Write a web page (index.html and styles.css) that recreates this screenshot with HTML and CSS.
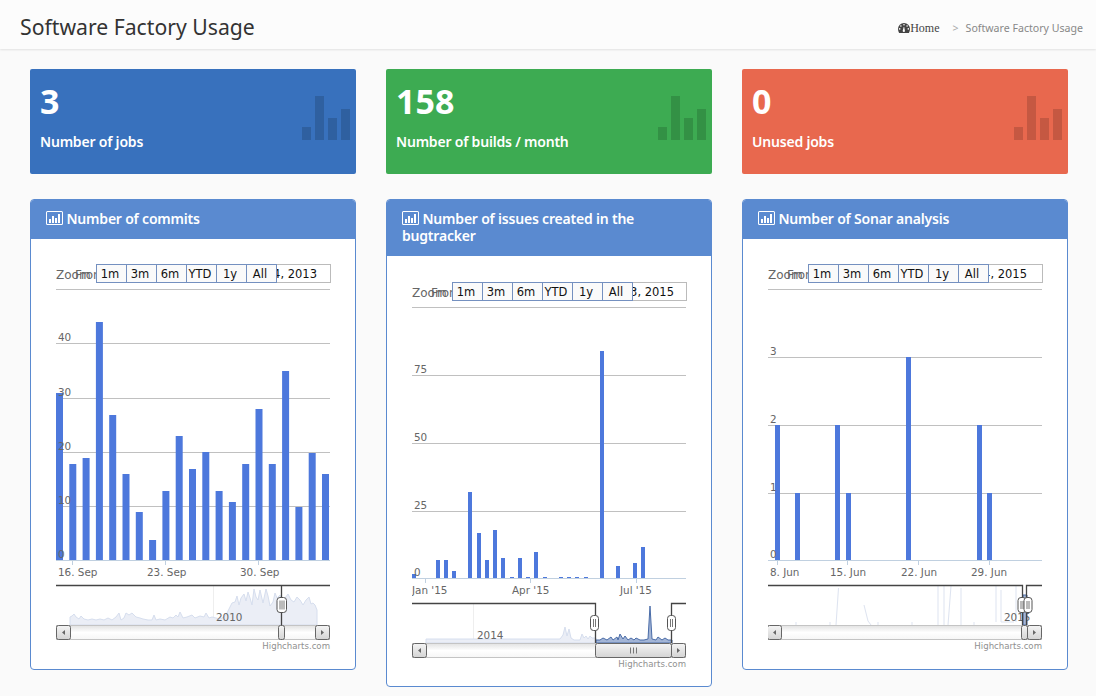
FILE: index.html
```html
<!DOCTYPE html>
<html lang="en">
<head>
    <meta charset="UTF-8">
    <title>Software Factory Usage</title>
    <link rel="stylesheet" href="styles.css">
</head>
<body>
    <header class="page-header">
        <h1>Software Factory Usage</h1>
        <ol class="breadcrumb">
            <li class="crumb-home">
                <svg class="gauge" viewBox="0 0 12 10"><path d="M6 0a6 6 0 0 0-6 6c0 1.500.4 2.800 1.100 4h9.800c.7-1.200 1.100-2.500 1.100-4a6 6 0 0 0-6-6zM1.700 6.700a.8.8 0 1 1 0-1.600.8.8 0 0 1 0 1.600zm1.200-2.900a.8.8 0 1 1 0-1.600.8.8 0 0 1 0 1.600zm3.100-1.200a.8.8 0 1 1 0-1.600.8.8 0 0 1 0 1.600zm1 5.700a1.200 1.200 0 0 1-2.300-.6l1-3.600.5-.1zm2.100-4.500a.8.8 0 1 1 0-1.600.8.8 0 0 1 0 1.600zm1.200 2.900a.8.8 0 1 1 0-1.600.8.8 0 0 1 0 1.600z" fill-rule="evenodd"/></svg>Home
            </li>
            <li class="crumb-sep">&gt;</li>
            <li class="crumb-current">Software Factory Usage</li>
        </ol>
    </header>

    <main class="content">
        <section class="stats">
            <div class="stat stat-blue">
                <div class="stat-value">3</div>
                <div class="stat-label">Number of jobs</div>
                <svg class="stat-icon" viewBox="0 0 48 44"><path d="M0 31h9v13H0zM13 0h9v44h-9zM26 22h9v22h-9zM39 13h9v31h-9z"/></svg>
            </div>
            <div class="stat stat-green">
                <div class="stat-value">158</div>
                <div class="stat-label">Number of builds / month</div>
                <svg class="stat-icon" viewBox="0 0 48 44"><path d="M0 31h9v13H0zM13 0h9v44h-9zM26 22h9v22h-9zM39 13h9v31h-9z"/></svg>
            </div>
            <div class="stat stat-red">
                <div class="stat-value">0</div>
                <div class="stat-label">Unused jobs</div>
                <svg class="stat-icon" viewBox="0 0 48 44"><path d="M0 31h9v13H0zM13 0h9v44h-9zM26 22h9v22h-9zM39 13h9v31h-9z"/></svg>
            </div>
        </section>

        <section class="panels">
            <!-- commits -->
            <article class="panel">
                <h2 class="panel-title"><svg class="panel-icon" viewBox="0 0 17 14"><path d="M1.500 0h14A1.500 1.500 0 0 1 17 1.500v11a1.500 1.500 0 0 1-1.500 1.500h-14A1.500 1.500 0 0 1 0 12.500v-11A1.500 1.500 0 0 1 1.500 0zm0 1a.5.5 0 0 0-.5.500v11c0 .3.200.5.500.5h14c.3 0 .5-.2.5-.5v-11a.5.5 0 0 0-.5-.5zM3 8h2v4H3zM6 5h2v7H6zM9 7h2v5H9zM12 3h2v9h-2z" fill-rule="evenodd"/></svg> Number of commits</h2>
                <div class="panel-body">
                    <svg class="chart" viewBox="56 262 276 393">
                        <defs>
                            <linearGradient id="track" x1="0" y1="0" x2="0" y2="1">
                                <stop offset="0" stop-color="#e2e2e2"/>
                                <stop offset="0.5" stop-color="#fff"/>
                                <stop offset="1" stop-color="#f6f6f6"/>
                            </linearGradient>
                            <linearGradient id="btn" x1="0" y1="0" x2="0" y2="1">
                                <stop offset="0" stop-color="#f4f4f4"/>
                                <stop offset="1" stop-color="#d4d4d4"/>
                            </linearGradient>
                        </defs>
                        <text class="rs-label" x="56" y="279">Zoom</text>
                        <text class="rs-label" x="75" y="279">From</text>
                        <rect class="rs-input" x="96.500" y="264.500" width="234" height="18"/>
                        <text class="rs-date" x="317" y="278" text-anchor="end">Sep 14, 2013</text>
                        <g class="rs-btns">
                            <rect x="96.500" y="264.500" width="30" height="18"/><rect x="126.500" y="264.500" width="30" height="18"/><rect x="156.500" y="264.500" width="30" height="18"/><rect x="186.500" y="264.500" width="30" height="18"/><rect x="216.500" y="264.500" width="30" height="18"/><rect x="246.500" y="264.500" width="30" height="18"/>
                        </g>
                        <g class="rs-text">
                            <text x="110" y="278">1m</text><text x="140" y="278">3m</text><text x="170" y="278">6m</text><text x="200" y="278">YTD</text><text x="230" y="278">1y</text><text x="260" y="278">All</text>
                        </g>

                        <path class="grid" d="M56 289.500h274M56 343.500h274M56 398.500h274M56 452.500h274M56 506.500h274"/>
                        <path class="bars" d="M56 393h7v167h-7zM69.300 464h7v96h-7zM82.600 458h7v102h-7zM95.900 322h7v238h-7zM109.200 415h7v145h-7zM122.500 474h7v86h-7zM135.800 512h7v48h-7zM149.100 540h7v20h-7zM162.400 491h7v69h-7zM175.700 436h7v124h-7zM189 469h7v91h-7zM202.300 452h7v108h-7zM215.600 491h7v69h-7zM228.900 502h7v58h-7zM242.200 464h7v96h-7zM255.500 409h7v151h-7zM268.800 464h7v96h-7zM282.100 371h7v189h-7zM295.400 507h7v53h-7zM308.700 453h7v107h-7zM322 474h7v86h-7z"/>
                        <path class="axis" d="M56 560.500h274M72.500 560v5M165.500 560v5M258.500 560v5"/>
                        <g class="label">
                            <text x="58" y="341">40</text><text x="58" y="396">30</text><text x="58" y="450">20</text><text x="58" y="504">10</text><text x="58" y="558">0</text>
                            <text x="58" y="576">16. Sep</text><text x="147" y="576">23. Sep</text><text x="240" y="576">30. Sep</text>
                        </g>

                        <path class="nav-grid" d="M213.500 586v39"/>
                        <path class="nav-area" d="M70 625V617L72 616 74 614 76 617 79 619 81 616 84 619 88 620 92 619 96 620 100 619 104 620 108 618 112 620 116 617 119 613 121 620 124 618 126 613 129 615 132 613 136 617 140 618 143 619 148 620 152 620 154 615 156 620 160 619 165 620 170 617 173 618 176 615 178 617 180 612 183 618 187 617 192 615 195 618 200 616 204 617 206 613 209 618 212 617 216 618 220 619 224 617 227 613 230 607 232 603 235 602 237 596 239 605 241 598 244 594 246 601 248 592 250 598 252 605 254 589 256 597 258 600 260 590 263 603 266 589 268 596 270 606 273 602 275 593 277 598 280 595 283 605 285 598 288 594 291 600 294 602 297 597 300 600 303 605 306 600 309 597 311 604 313 603 315 605 317 610V625z"/>
                        <text class="label" x="216" y="621">2010</text>
                        <path class="nav-mask" d="M56 585.500H281.500M281.500 585V625M281.500 585.500H330"/>
                        <rect class="track" x="56.500" y="625.500" width="273" height="14"/>
                        <rect class="thumb" x="278.500" y="625.500" width="6" height="14" rx="2"/>
                        <rect class="sb-btn" x="56.500" y="625.500" width="14" height="14" rx="2"/><path class="sb-arrow" d="M65 630v5l-3-2.500z"/>
                        <rect class="sb-btn" x="315.500" y="625.500" width="14" height="14" rx="2"/><path class="sb-arrow" d="M321 630v5l3-2.500z"/>
                        <rect class="handle" x="277" y="597.500" width="9.500" height="15" rx="3"/><path class="grip" d="M280 600.500v9M282 600.500v9M284 600.500v9"/>
                        <text class="credits" x="330" y="649" text-anchor="end">Highcharts.com</text>
                    </svg>
                </div>
            </article>

            <!-- issues -->
            <article class="panel">
                <h2 class="panel-title"><svg class="panel-icon" viewBox="0 0 17 14"><path d="M1.500 0h14A1.500 1.500 0 0 1 17 1.500v11a1.500 1.500 0 0 1-1.500 1.500h-14A1.500 1.500 0 0 1 0 12.500v-11A1.500 1.500 0 0 1 1.500 0zm0 1a.5.5 0 0 0-.5.500v11c0 .3.200.5.500.5h14c.3 0 .5-.2.5-.5v-11a.5.5 0 0 0-.5-.5zM3 8h2v4H3zM6 5h2v7H6zM9 7h2v5H9zM12 3h2v9h-2z" fill-rule="evenodd"/></svg> Number of issues created in the bugtracker</h2>
                <div class="panel-body">
                    <svg class="chart" viewBox="412 279 276 393">
                        <text class="rs-label" x="412" y="297">Zoom</text>
                        <text class="rs-label" x="431" y="297">From</text>
                        <rect class="rs-input" x="452.500" y="282.500" width="234" height="18"/>
                        <text class="rs-date" x="674" y="296" text-anchor="end">Jul 13, 2015</text>
                        <g class="rs-btns">
                            <rect x="452.500" y="282.500" width="30" height="18"/><rect x="482.500" y="282.500" width="30" height="18"/><rect x="512.500" y="282.500" width="30" height="18"/><rect x="542.500" y="282.500" width="30" height="18"/><rect x="572.500" y="282.500" width="30" height="18"/><rect x="602.500" y="282.500" width="30" height="18"/>
                        </g>
                        <g class="rs-text">
                            <text x="466" y="296">1m</text><text x="496" y="296">3m</text><text x="526" y="296">6m</text><text x="556" y="296">YTD</text><text x="586" y="296">1y</text><text x="616" y="296">All</text>
                        </g>

                        <path class="grid" d="M412 307.500h274M412 375.500h274M412 443.500h274M412 511.500h274"/>
                        <path class="bars" d="M412 574h4v4h-4zM436 560h4v18h-4zM444 560h4v18h-4zM452 571h4v7h-4zM468 492h4v86h-4zM477 533h4v45h-4zM485 560h4v18h-4zM493 530h4v48h-4zM501 558h4v20h-4zM510 577h4v1h-4zM518 558h4v20h-4zM526 577h4v1h-4zM534 552h4v26h-4zM543 577h4v1h-4zM559 577h4v1h-4zM567 577h4v1h-4zM575 577h4v1h-4zM584 577h4v1h-4zM600 351h4v227h-4zM616 566h4v12h-4zM633 563h4v15h-4zM641 547h4v31h-4z"/>
                        <path class="axis" d="M412 578.500h274M425.500 578v5M530.500 578v5M636.500 578v5"/>
                        <g class="label">
                            <text x="414" y="373">75</text><text x="414" y="441">50</text><text x="414" y="509">25</text><text x="414" y="576">0</text>
                            <text x="412" y="594">Jan '15</text><text x="512" y="594">Apr '15</text><text x="620" y="594">Jul '15</text>
                        </g>

                        <path class="nav-grid" d="M473.500 604v39"/>
                        <path class="nav-area" d="M426 643V639H560L563 635 565 627 567 636 569 629 571 638 574 640 580 640 582 634 584 638 586 636 588 639 590 636 592 638 596 638V643z"/>
                        <path class="nav-area-on" d="M596 643V640L600 640 603 638 607 640 611 637 613 640 617 637 618 640 620 634 623 639 625 636 628 640 631 638 634 640 636 638 640 640 644 640 648 639 650 606 652 639 656 640 658 637 662 640 665 638 668 640 672 640V643z"/>
                        <text class="label" x="477" y="639">2014</text>
                        <path class="nav-mask" d="M412 603.500H595.500V643M671.500 643V603.500H686"/>
                        <rect class="track" x="412.500" y="643.500" width="273" height="14"/>
                        <rect class="thumb" x="595.500" y="643.500" width="76" height="14" rx="2"/><path class="grip" d="M630.500 647.500v6M633.500 647.500v6M636.500 647.500v6"/>
                        <rect class="sb-btn" x="412.500" y="643.500" width="14" height="14" rx="2"/><path class="sb-arrow" d="M421 648v5l-3-2.500z"/>
                        <rect class="sb-btn" x="671.500" y="643.500" width="14" height="14" rx="2"/><path class="sb-arrow" d="M677 648v5l3-2.500z"/>
                        <rect class="handle" x="590.500" y="615.500" width="8" height="15" rx="3"/><path class="grip" d="M593.500 619v8M595.500 619v8"/>
                        <rect class="handle" x="667.500" y="615.500" width="8" height="15" rx="3"/><path class="grip" d="M670.500 619v8M672.500 619v8"/>
                        <text class="credits" x="686" y="667" text-anchor="end">Highcharts.com</text>
                    </svg>
                </div>
            </article>

            <!-- sonar -->
            <article class="panel">
                <h2 class="panel-title"><svg class="panel-icon" viewBox="0 0 17 14"><path d="M1.500 0h14A1.500 1.500 0 0 1 17 1.500v11a1.500 1.500 0 0 1-1.500 1.500h-14A1.500 1.500 0 0 1 0 12.500v-11A1.500 1.500 0 0 1 1.500 0zm0 1a.5.5 0 0 0-.5.500v11c0 .3.200.5.500.5h14c.3 0 .5-.2.5-.5v-11a.5.5 0 0 0-.5-.5zM3 8h2v4H3zM6 5h2v7H6zM9 7h2v5H9zM12 3h2v9h-2z" fill-rule="evenodd"/></svg> Number of Sonar analysis</h2>
                <div class="panel-body">
                    <svg class="chart" viewBox="768 262 276 393">
                        <text class="rs-label" x="768" y="279">Zoom</text>
                        <text class="rs-label" x="787" y="279">From</text>
                        <rect class="rs-input" x="808.500" y="264.500" width="234" height="18"/>
                        <text class="rs-date" x="1027" y="278" text-anchor="end">Jul 14, 2015</text>
                        <g class="rs-btns">
                            <rect x="808.500" y="264.500" width="30" height="18"/><rect x="838.500" y="264.500" width="30" height="18"/><rect x="868.500" y="264.500" width="30" height="18"/><rect x="898.500" y="264.500" width="30" height="18"/><rect x="928.500" y="264.500" width="30" height="18"/><rect x="958.500" y="264.500" width="30" height="18"/>
                        </g>
                        <g class="rs-text">
                            <text x="822" y="278">1m</text><text x="852" y="278">3m</text><text x="882" y="278">6m</text><text x="912" y="278">YTD</text><text x="942" y="278">1y</text><text x="972" y="278">All</text>
                        </g>

                        <path class="grid" d="M768 289.500h274M768 357.500h274M768 425.500h274M768 493.500h274"/>
                        <path class="bars" d="M775 425h5v135h-5zM795 493h5v67h-5zM835 425h5v135h-5zM846 493h5v67h-5zM906 357h5v203h-5zM977 425h5v135h-5zM987 493h5v67h-5z"/>
                        <path class="axis" d="M768 560.500h274M777.500 560v5M847.500 560v5M918.500 560v5M989.500 560v5"/>
                        <g class="label">
                            <text x="770" y="355">3</text><text x="770" y="423">2</text><text x="770" y="491">1</text><text x="770" y="558">0</text>
                            <text x="770" y="576">8. Jun</text><text x="830" y="576">15. Jun</text><text x="901" y="576">22. Jun</text><text x="971" y="576">29. Jun</text>
                        </g>

                        <path class="nav-spikes" d="M796 625V622M830 625V622M836 625L838.500 588M864 605L868 621 871 625M878 625V622M912 625V622M938 625V586M944 625V586M948 625L951 586M961 625V588M974 625V622M996 622V586M1001 590V622H1014M1016 586V622"/>
                        <text class="label" x="1004" y="621">2015</text>
                        <path class="nav-area-on" d="M1023 595h4v30h-4z"/>
                        <path class="nav-mask" d="M768 585.500H1022.500V625M1026.500 625V585.500H1042"/>
                        <rect class="track" x="767.500" y="625.500" width="274" height="14"/>
                        <rect class="thumb" x="1021.500" y="625.500" width="6" height="14" rx="2"/>
                        <rect class="sb-btn" x="767.500" y="625.500" width="14" height="14" rx="2"/><path class="sb-arrow" d="M776 630v5l-3-2.500z"/>
                        <rect class="sb-btn" x="1027.500" y="625.500" width="14" height="14" rx="2"/><path class="sb-arrow" d="M1033 630v5l3-2.500z"/>
                        <rect class="handle" x="1018" y="597.500" width="8" height="15" rx="3"/><path class="grip" d="M1021 601v8M1023 601v8"/>
                        <rect class="handle" x="1024" y="597.500" width="8" height="15" rx="3"/><path class="grip" d="M1027 601v8M1029 601v8"/>
                        <text class="credits" x="1042" y="649" text-anchor="end">Highcharts.com</text>
                    </svg>
                </div>
            </article>
        </section>
    </main>
</body>
</html>
```

FILE: styles.css
```css
:root {
    --page-bg: #fafafa;
    --panel-blue: #5a8ad0;
    --text-color: #333;
    --sans: "Noto Sans", "Open Sans", sans-serif;
}

* {
    box-sizing: border-box;
}

body {
    margin: 0;
    background-color: var(--page-bg);
    color: var(--text-color);
    font-family: var(--sans);
}

.page-header {
    display: flex;
    align-items: center;
    justify-content: space-between;
    height: 49px;
    padding: 4px 13px 0 20px;
    background-color: #fcfcfc;
    box-shadow: 0 1px 2px rgba(0, 0, 0, 0.1);
}

h1 {
    margin: 0;
    font-size: 21.200px;
    font-weight: 400;
}

.breadcrumb {
    display: flex;
    align-items: center;
    margin: 3px 0 0;
    padding: 0;
    list-style: none;
    font-size: 10.600px;
}

.crumb-home {
    display: flex;
    align-items: center;
    font-family: "Liberation Serif", serif;
    font-size: 12px;
    color: #444;
}

.gauge {
    width: 12px;
    height: 10px;
    fill: #444;
}

.crumb-sep {
    margin: 0 7px 0 13px;
    color: #aaa;
}

.crumb-current {
    color: #888;
}

.content {
    padding: 20px 28px 0 30px;
}

.stats,
.panels {
    display: grid;
    grid-template-columns: repeat(3, 326px);
    column-gap: 30px;
}

.stats {
    margin-bottom: 25px;
}

.panels {
    align-items: start;
}

.stat {
    position: relative;
    height: 105px;
    padding: 11px 10px;
    border-radius: 2px;
    color: #fff;
}

.stat-blue {
    background-color: #3871bd;
}

.stat-green {
    background-color: #3dab52;
}

.stat-red {
    background-color: #e8684e;
}

.stat-value {
    font-size: 34px;
    font-weight: 700;
    line-height: 42px;
}

.stat-label {
    margin-top: 9px;
    font-size: 14px;
    font-weight: 600;
    letter-spacing: -0.2px;
    line-height: 22px;
}

.stat-icon {
    position: absolute;
    top: 27px;
    right: 6px;
    width: 48px;
    height: 44px;
    fill: rgba(0, 0, 0, 0.15);
}

.panel {
    border: 1px solid var(--panel-blue);
    border-radius: 4px;
    background-color: #fff;
    overflow: hidden;
}

.panel-title {
    margin: 0;
    padding: 10px 15px 12px;
    background-color: var(--panel-blue);
    color: #fff;
    font-size: 14px;
    font-weight: 600;
    letter-spacing: -0.2px;
    line-height: 17px;
}

.panel-icon {
    width: 17px;
    height: 14px;
    vertical-align: -1px;
    fill: #fff;
}

.panel-body {
    padding: 23px 25px 14px;
}

.chart {
    display: block;
    width: 276px;
    height: 393px;
    font-family: "DejaVu Sans", sans-serif;
}

.rs-label {
    fill: #666;
    font-size: 12px;
}

.rs-input {
    fill: #fff;
    stroke: #bbb;
}

.rs-date {
    fill: #111;
    font-size: 11.500px;
}

.rs-btns rect {
    fill: #fafafa;
    stroke: #7490c0;
}

.rs-text text {
    fill: #111;
    font-size: 11.500px;
    text-anchor: middle;
}

.grid {
    stroke: #c0c0c0;
    fill: none;
}

.bars {
    fill: #4d78dc;
}

.axis {
    stroke: #c0d0e0;
    fill: none;
}

.label text,
text.label {
    fill: #666;
    font-size: 10.400px;
}

.nav-grid {
    stroke: #eee;
    fill: none;
}

.nav-area {
    fill: #ebeef6;
    stroke: #d6deee;
}

.nav-spikes {
    stroke: #dde3f0;
    fill: none;
}

.nav-area-on {
    fill: #a3b5d6;
    stroke: #4a6ca8;
}

.nav-mask {
    stroke: #444;
    stroke-width: 1.300;
    fill: none;
}

.track {
    fill: url(#track);
    stroke: #c4c4c4;
}

.thumb {
    fill: url(#btn);
    stroke: #666;
}

.sb-btn {
    fill: url(#btn);
    stroke: #666;
}

.sb-arrow {
    fill: #666;
}

.handle {
    fill: #fff;
    stroke: #555;
}

.grip {
    stroke: #777;
    fill: none;
}

.credits {
    fill: #909090;
    font-size: 8.600px;
}
```
